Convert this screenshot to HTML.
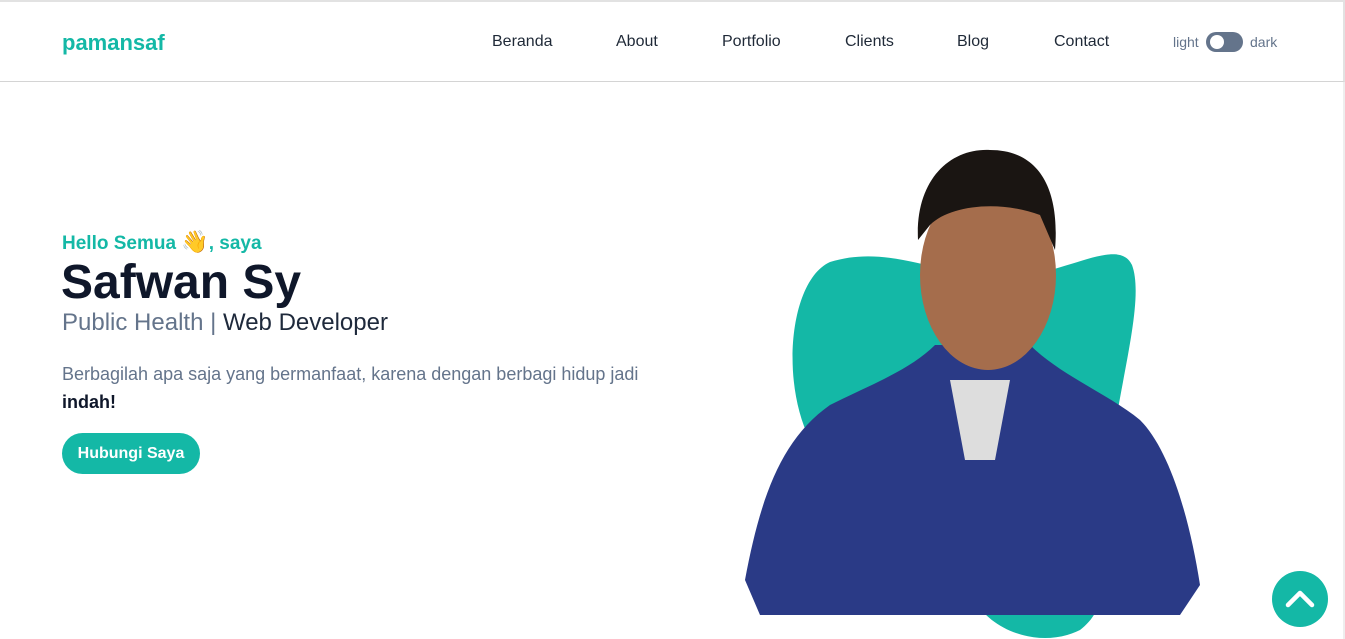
<!DOCTYPE html>
<html><head><meta charset="utf-8"><style>
*{margin:0;padding:0;box-sizing:border-box}
body{width:1345px;height:639px;overflow:hidden;background:#fff;font-family:"Liberation Sans",Arial,sans-serif;position:relative}
.top{position:absolute;left:0;top:0;width:1345px;height:82px;border-top:2px solid #e2e2e2;border-bottom:1px solid #d4d4d4;border-right:2px solid #e2e2e2}
.logo{position:absolute;left:62px;top:30px;font-size:22px;font-weight:bold;color:#14b8a6}
.nav a{position:absolute;top:33px;font-size:16px;color:#1f2937;text-decoration:none}
.tg{position:absolute;top:34px;font-size:14px;color:#64748b}
.sw{position:absolute;left:1206px;top:32px;width:37px;height:20px;border-radius:10px;background:#64748b}
.sw:after{content:"";position:absolute;left:4px;top:3px;width:14px;height:14px;border-radius:50%;background:#fff}
.h1{position:absolute;left:62px;top:229px;font-size:19px;font-weight:bold;color:#14b8a6}
.h1 i{font-style:normal;font-size:22px}
.name{position:absolute;left:61px;top:255px;font-size:48px;font-weight:bold;color:#0f172a}
.sub{position:absolute;left:62px;top:309px;font-size:24px;color:#64748b}
.sub span{color:#1e293b}
.p{position:absolute;left:62px;top:360px;font-size:18px;line-height:28px;color:#64748b;width:620px}
.p b{color:#0f172a}
.btn{position:absolute;left:62px;top:433px;width:138px;height:41px;border-radius:21px;background:#14b8a6;color:#fff;font-weight:bold;font-size:16px;text-align:center;line-height:41px}
.vl{position:absolute;left:1343px;top:82px;width:2px;height:557px;background:#eee}
</style></head><body>
<div class="top"></div>
<div class="logo">pamansaf</div>
<div class="nav"><a style="left:492px">Beranda</a><a style="left:616px">About</a><a style="left:722px">Portfolio</a><a style="left:845px">Clients</a><a style="left:957px">Blog</a><a style="left:1054px">Contact</a></div>
<div class="tg" style="left:1173px">light</div><div class="sw"></div><div class="tg" style="left:1250px">dark</div>
<div class="h1">Hello Semua <i>👋</i>, saya</div>
<div class="name">Safwan Sy</div>
<div class="sub">Public Health | <span>Web Developer</span></div>
<div class="p">Berbagilah apa saja yang bermanfaat, karena dengan berbagi hidup jadi <b>indah!</b></div>
<div class="btn">Hubungi Saya</div>
<svg style="position:absolute;left:0;top:0" width="1345" height="639">
<path d="M830 262 C900 240 960 290 1030 275 C1080 265 1120 240 1132 265 C1145 300 1120 380 1110 460 C1100 540 1120 600 1080 630 C1040 650 990 630 975 600 C950 540 850 500 810 440 C780 380 790 280 830 262Z" fill="#14b8a6"/>
<path d="M745 580 C760 500 780 440 830 405 C870 385 910 370 935 345 L1030 345 C1060 375 1110 395 1140 420 C1170 450 1190 520 1200 585 L1180 615 L760 615 Z" fill="#2a3a86"/>
<path d="M950 380 L1010 380 L995 460 L965 460 Z" fill="#ddd"/>
<ellipse cx="988" cy="275" rx="68" ry="95" fill="#a56d4c"/>
<path d="M918 240 C915 180 950 148 990 150 C1040 150 1060 190 1055 250 L1040 215 C1000 200 950 205 930 225 Z" fill="#1a1512"/>
</svg>
<div class="vl"></div>
<svg style="position:absolute;left:1272px;top:571px" width="56" height="56"><circle cx="28" cy="28" r="28" fill="#14b8a6"/><path d="M16 34 L28 22 L40 34" fill="none" stroke="#fff" stroke-width="4.5" stroke-linecap="round" stroke-linejoin="round"/></svg>
</body></html>
